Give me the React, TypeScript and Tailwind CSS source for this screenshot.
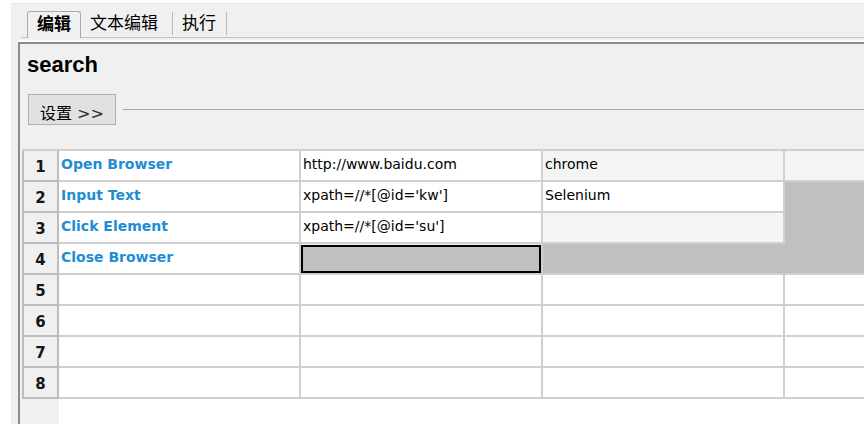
import clsx from 'clsx';

type CellSpec = {
  text?: string;
  kw?: boolean;
  bg?: string;
  border?: string;
  selected?: boolean;
};

const rows: CellSpec[][] = [
  [
    { text: 'Open Browser', kw: true },
    { text: 'http://www.baidu.com' },
    { text: 'chrome', bg: 'bg-[#f4f4f4]' },
    { bg: 'bg-[#f4f4f4]' },
  ],
  [
    { text: 'Input Text', kw: true },
    { text: "xpath=//*[@id='kw']" },
    { text: 'Selenium' },
    { bg: 'bg-[#c0c0c0]', border: 'border-[#c0c0c0]' },
  ],
  [
    { text: 'Click Element', kw: true },
    { text: "xpath=//*[@id='su']" },
    { bg: 'bg-[#f4f4f4]' },
    { bg: 'bg-[#c0c0c0]', border: 'border-[#c0c0c0]' },
  ],
  [
    { text: 'Close Browser', kw: true },
    { selected: true },
    { bg: 'bg-[#c0c0c0]', border: 'border-r-[#c0c0c0] border-b-[#d0d0d0]' },
    { bg: 'bg-[#c0c0c0]' },
  ],
  [{}, {}, {}, {}],
  [{}, {}, {}, {}],
  [{}, {}, {}, {}],
  [{}, {}, {}, {}],
];

function Cell({ cell, last }: { cell: CellSpec; last: boolean }) {
  if (cell.selected) {
    return (
      <div className="w-[242px] shrink-0 h-full border-r-2 border-b-2 border-[#d0d0d0] pt-px">
        <div className="h-full border-2 border-black bg-[#c0c0c0]" />
      </div>
    );
  }
  return (
    <div
      className={clsx(
        'h-full border-b-2 pl-[2px] pt-[5px] text-[14px] leading-[17px] whitespace-nowrap overflow-hidden',
        last ? 'flex-1' : 'w-[242px] shrink-0 border-r-2',
        cell.bg ?? 'bg-white',
        cell.border ?? 'border-[#d0d0d0]',
        cell.kw ? 'font-bold text-[#1f8dd4]' : 'text-black'
      )}
    >
      {cell.text}
    </div>
  );
}

export default function App() {
  return (
    <div className="w-[864px] h-[424px] overflow-hidden bg-white pl-[11px] pt-[3px] font-['DejaVu_Sans','Noto_Sans_CJK_SC',sans-serif]">
      <div className="h-full bg-[#f0f0f0] border-t border-[#e3e3e3] flex flex-col">
        {/* tabs */}
        <div className="ml-[10px] mt-[7px] h-[27px] shrink-0 flex items-end border-b border-[#c4c4c4] pl-[6px] text-[17px] text-black">
          <div className="h-[27px] -mb-px px-[9px] border border-b-0 border-[#a9a9a9] rounded-t-[3px] bg-[#f0f0f0] flex items-center font-bold">
            编辑
          </div>
          <div className="h-[23px] mb-[2px] pl-[9px] pr-[14px] border-r border-[#b8b8b8] flex items-center">
            文本编辑
          </div>
          <div className="h-[23px] mb-[2px] pl-[9px] pr-[10px] border-r border-[#b8b8b8] flex items-center">
            执行
          </div>
        </div>

        <div className="mt-[2px] ml-[7px] h-[2px] shrink-0 bg-white" />

        {/* panel */}
        <div className="ml-[7px] flex-1 min-h-0 border-t-2 border-l-2 border-[#8c8c8c] flex flex-col">
          <div className="pl-[7px] pt-[8px] font-['Liberation_Sans',sans-serif] font-bold text-[22px] leading-[25px] text-black">
            search
          </div>

          <div className="mt-[17px] pl-[8px] flex items-center gap-[7px]">
            <button className="h-[31px] w-[88px] shrink-0 border border-[#adadad] bg-[#e1e1e1] text-[16px] text-black flex items-center pl-[11px] pt-[8px] leading-[18px]">
              设置 <span className="ml-[5px] text-[#2b2b3a]">&gt;&gt;</span>
            </button>
            <div className="flex-1 h-px bg-[#a8a8a8]" />
          </div>

          {/* grid */}
          <div className="mt-[24px] ml-[2px] flex-1 flex flex-col">
            <div className="border-t-2 border-[#cfcfcf]">
              {rows.map((r, i) => (
                <div key={i} className="flex h-[31px]">
                  <div className="w-[37px] shrink-0 h-full border-l-2 border-r-2 border-b-2 border-[#bdbdbd] bg-[#f0f0f0] flex items-center justify-center pt-[4px] font-bold text-[15px] text-[#161616]">
                    {i + 1}
                  </div>
                  {r.map((c, j) => (
                    <Cell key={j} cell={c} last={j === r.length - 1} />
                  ))}
                </div>
              ))}
            </div>
            <div className="flex-1 flex">
              <div className="w-[37px] shrink-0 bg-[#f0f0f0]" />
              <div className="flex-1 bg-white" />
            </div>
          </div>
        </div>
      </div>
    </div>
  );
}
